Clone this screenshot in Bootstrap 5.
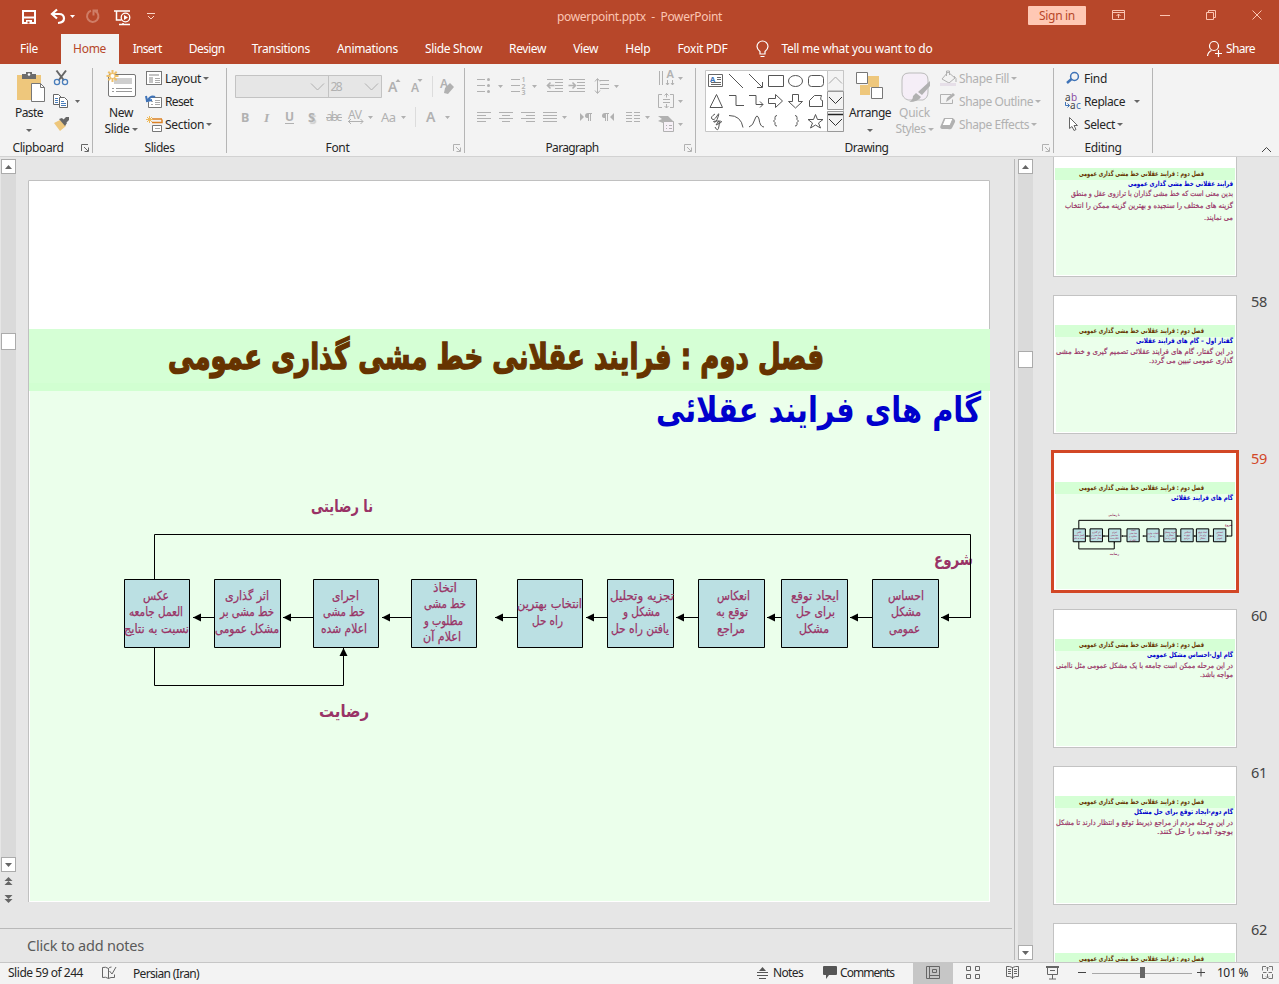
<!DOCTYPE html>
<html lang="en">
<head>
<meta charset="utf-8">
<title>powerpoint.pptx - PowerPoint</title>
<link href="https://cdn.jsdelivr.net/npm/bootstrap@5.3.0/dist/css/bootstrap.min.css" rel="stylesheet">
<style>
body{font-family:"Noto Sans","Open Sans",sans-serif;font-size:12px;line-height:16px;color:#262626;background:#e6e6e6;width:1279px;height:984px;overflow:hidden}
svg{display:block;flex:none;overflow:visible}
svg text{font-family:"Noto Sans","Open Sans",sans-serif}
[data-w]{white-space:nowrap;display:inline-block}
.titlebar{height:34px;background:#b7472a;color:#fbc5b2}
.titlebar .doc{width:868px;padding-left:397px}
.signin{width:58px;height:19px;background:#ffc8b4;color:#b7472a;border-radius:1px;line-height:19px;padding:0;font-size:12px;border:0;margin-bottom:3px}
.tabs{height:30px;background:#b7472a;padding-left:6.5px}
.tabs .nav-link{color:#fff;height:30px;padding:0 13.55px;line-height:29px}
.tabs .nav-link.active{background:#f3f3f3;color:#b7472a;border-radius:0;width:58px;padding:0 12px}
.tabs .file{margin-right:9.500px}
.ribbon{height:93px;background:#f3f3f3;border-bottom:1px solid #d2d2d2}
.ribbon .vr{width:1px;height:85px;margin-top:4px;background:#b5b5b5;opacity:1;align-self:flex-start}
.grp-body{height:76px}
.launch{width:16px}
.g1{width:92px}.g2{width:133px}.g3{width:237px}.g4{width:230px}.g5{width:357px}.g6{width:98px}
.big{display:flex;flex-direction:column;align-items:center;border:0;background:none;padding:0;color:inherit;line-height:15.5px}
.w-paste{width:48px;margin-left:5px}.w-new{width:50px;margin-left:3px}.w-arr{width:42px}.w-quick{width:47px}
.cmds{padding-top:3px}
.cmds>div{height:23px;line-height:22px;display:flex;align-items:center}
.caret{width:0;height:0;border:3px solid transparent;border-top:3px solid #666;border-bottom:0;display:inline-block;margin-left:2px;vertical-align:middle}
.caret.far{margin-left:9px}
.dim{color:#b1b1b1}.dim .caret{border-top-color:#b1b1b1}
.work{height:805px}
.left-pane{width:1012px}
.stage{height:771px}
.sbar{width:15px;background:#dadada}
.sbar .cap,.sbar .knob{width:15px;background:#fff;border:1px solid #ababab}
.sbar .cap{height:15px;display:flex;align-items:center;justify-content:center}
.sbar .knob{height:17px}
.sb-l{height:713px;margin:2px 0 0 1px}.sb-l .knob{margin-top:159px}
.sb-r{height:801px;margin:2px 0 0 3px}.sb-r .knob{margin-top:177px}
.slide-wrap{padding:23px 0 0 12px}
.notes{height:34px;border-top:1px solid #b9b9b9;font-size:14.5px;color:#5a5a5a;padding:0 0 0 27px;line-height:32px}
.split{width:1px;background:#b9b9b9;margin:2px 0 2px 2px}
.rail{overflow:hidden;height:805px;padding-left:20px}
.rail-list{margin-top:-19px;gap:18px}
.thumb{width:184px;height:139px;border:1px solid #c3c3c3;background:#fff}
.thumb.sel{outline:3px solid #d24726;outline-offset:-1px;border-color:#d24726}
.num{font-size:14.5px;color:#444;margin-left:14px;line-height:12px}
.sel+.num{color:#d24726}
.status{height:22px;background:#f3f3f3;border-top:1px solid #c6c6c6}
.lh-st{line-height:20px}
.fa{font-family:"DejaVu Sans",sans-serif;direction:rtl}
</style>
</head>
<body>
<header>
 <div class="titlebar d-flex align-items-center">
  <svg width="160" height="34" viewBox="0 0 160 34" fill="none" stroke="#fff">
   <path d="M23 11h12v12H23zM23 17.5h12" stroke-width="2"/><path d="M26 20h6v4h-6z" fill="#fff" stroke="none"/><path d="M27.500 21.500h2v2h-2z" fill="#b7472a" stroke="none"/>
   <path d="M53 14h6q5 0 5 4.500q0 4-6 4.500" stroke-width="2.200"/><path d="M57 9.500l-5 4.500 5 4.500" stroke-width="2.200"/>
   <path d="M70 15h5l-2.500 3z" fill="#fff" stroke="none"/>
   <g stroke="#cf7d66" stroke-width="2"><path d="M91 10.800a5.700 5.700 0 1 0 4 .2M98 10.500h-4.500v5"/></g>
   <path d="M114 11h16M116.500 11v9h5M119 24.500h11M123 23v1.500" stroke-width="1.500"/><circle cx="125.500" cy="17.500" r="4.300" stroke-width="1.300"/><path d="M124 15l4 2.500-4 2.500z" fill="#fff" stroke="none"/>
   <path d="M147 13.500h8M148 16l3 3 3-3" stroke="#fbd3c6"/>
  </svg>
  <div class="doc"><span data-w="165" style="white-space:pre">powerpoint.pptx  -  PowerPoint</span></div>
  <button class="btn signin"><span data-w="36">Sign in</span></button>
  <svg width="193" height="34" viewBox="1086 0 193 34" fill="none" stroke="#fbc5b2">
   <path d="M1112.500 10.500h12v9h-12zM1112.500 12.500h12M1118.500 18v-4M1116.500 16l2-2 2 2M1160 15.500h10M1206.500 12.500h7v7h-7zM1208.500 12v-1.500h7v7h-2M1252.500 10.500l9 9M1261.500 10.500l-9 9"/>
  </svg>
 </div>
 <nav class="tabs nav flex-nowrap">
  <a class="nav-link file"><span data-w="18">File</span></a>
  <a class="nav-link active"><span data-w="33">Home</span></a>
  <a class="nav-link"><span data-w="29">Insert</span></a>
  <a class="nav-link"><span data-w="36">Design</span></a>
  <a class="nav-link"><span data-w="58">Transitions</span></a>
  <a class="nav-link"><span data-w="61">Animations</span></a>
  <a class="nav-link"><span data-w="57">Slide Show</span></a>
  <a class="nav-link"><span data-w="37">Review</span></a>
  <a class="nav-link"><span data-w="25">View</span></a>
  <a class="nav-link"><span data-w="25">Help</span></a>
  <a class="nav-link"><span data-w="50">Foxit PDF</span></a>
  <svg width="27" height="30" viewBox="740 34 27 30" fill="none" stroke="#fff"><path d="M759 54v-2.500q-3-2.500-3-5a5.500 5.500 0 0 1 11 0q0 2.500-3 5v2.500zM759.500 56.500h4" stroke-width="1.200"/></svg>
  <a class="nav-link"><span data-w="151">Tell me what you want to do</span></a>
  <svg class="ms-auto" width="16" height="30" viewBox="1207 34 16 30" fill="none" stroke="#fff"><circle cx="1215" cy="46" r="4.500" stroke-width="1.200"/><path d="M1208.500 56q.5-4 4-5.500M1219.500 50v7M1216 53.500h7" stroke-width="1.200"/></svg>
  <a class="nav-link ps-1 pe-4"><span data-w="29">Share</span></a>
 </nav>
 <div class="ribbon d-flex">
  <section class="g1">
   <div class="grp-body d-flex">
    <button class="big w-paste">
     <svg width="48" height="41" viewBox="5 64 48 41"><path d="M17 75h24v25H17z" fill="#eec77c"/><path d="M22 74h4v-2h6v2h4v5H22z" fill="#6b6b6b"/><circle cx="29" cy="74.500" r="1.300" fill="#fff"/><path d="M31.500 83.500h9l4 4v14h-13z" fill="#fff" stroke="#777"/><path d="M40.500 83.500v4h4" fill="none" stroke="#777"/></svg>
     <span data-w="28">Paste</span><i class="caret ms-0 mt-2"></i></button>
    <svg width="39" height="76" viewBox="53 64 39 76" fill="none">
     <path d="M56.500 70.500l7.500 10M66 70.500l-7.500 10" stroke="#666" stroke-width="2"/><circle cx="57" cy="82" r="2.600" stroke="#4a7ebb" stroke-width="1.300"/><circle cx="65" cy="82" r="2.600" stroke="#4a7ebb" stroke-width="1.300"/>
     <path d="M53.500 94.500h5l3 3v7h-8z" fill="#fff" stroke="#666"/><path d="M59.500 97.500h5l3 3v7h-8z" fill="#fff" stroke="#666"/><path d="M55 98.500h3M55 100.500h3M55 102.500h3M61 101.500h3M61 103.500h5M61 105.500h5" stroke="#4a7ebb"/>
     <path d="M75 100h5l-2.500 3z" fill="#666"/>
     <path d="M54 123l6-3 6 6-6 5z" fill="#eec77c"/><path d="M59 119l3-1 5 5-2 3z M63 120l3-3h3v3l-3 3z" fill="#666"/>
    </svg>
   </div>
   <div class="d-flex"><div class="flex-grow-1 text-center"><span data-w="51">Clipboard</span></div>
    <svg class="launch" width="16" height="16" viewBox="0 0 16 16" fill="none" stroke="#666"><path d="M5.500 11V4.500H12M8 7l4 4M12.500 7.500v4h-4"/></svg></div>
  </section><div class="vr"></div>
  <section class="g2">
   <div class="grp-body d-flex">
    <button class="big w-new"><svg width="50" height="41" viewBox="96 64 50 41" fill="none"><rect x="108.500" y="74.500" width="27" height="22" rx="1.500" fill="#fff" stroke="#777"/><path d="M114 78h18v6h-18z" fill="#cfcfcf"/><path d="M112 88.500h2M116 88.500h16M112 91.500h2M116 91.500h16" stroke="#999"/><path d="M112.500 70v12M106.500 76h12M108.300 71.800l8.400 8.400M116.700 71.800l-8.400 8.400" stroke="#eec06a" stroke-width="2"/><circle cx="112.500" cy="76" r="2" fill="#fff"/></svg>
     <span data-w="24">New</span><span class="text-nowrap"><span data-w="25">Slide</span><i class="caret"></i></span></button>
    <svg width="19" height="76" viewBox="146 64 19 76" fill="none">
     <rect x="146.500" y="71.500" width="15" height="13" fill="#fff" stroke="#777"/><path d="M149 74h10v2h-10zM149 77h4v6h-4z" fill="#c4c4c4"/><path d="M155 78.500h5M155 80.500h5M155 82.500h5" stroke="#aaa"/>
     <path d="M151 97.500h10.500v10h-13v-6" fill="#fff" stroke="#777"/><path d="M155 100.500h5M155 102.500h5M155 104.500h5M151 101.500h2M151 104.500h2" stroke="#aaa"/><path d="M155 97q-4-2-7 3M146 96l1 5 5-1" stroke="#3f73b7" stroke-width="2"/>
     <path d="M152 119h10M152 122.500h10v-3" stroke="#dc8124" stroke-width="1.500"/><path d="M152.500 125.500h9v6h-9z" fill="#fff" stroke="#777"/><path d="M155 128.500h5" stroke="#aaa"/><path d="M149.500 116v7M146 119.500h7M147 117l5 5M152 117l-5 5" stroke="#eeb95a"/>
    </svg>
    <div class="cmds"><div><span data-w="36">Layout</span><i class="caret"></i></div><div><span data-w="28">Reset</span></div><div><span data-w="39">Section</span><i class="caret"></i></div></div>
   </div>
   <div class="text-center"><span data-w="30">Slides</span></div>
  </section><div class="vr"></div>
  <section class="g3">
   <svg width="237" height="76" viewBox="227 64 237 76" fill="none" stroke="#b1b1b1">
    <path d="M235.500 75.500h146v22h-146zM328.500 75v22" fill="#e6e6e6" stroke="#c3c3c3"/>
    <path d="M311 83.500l6.500 6.500 6.500-6.500M365 83.500l6.500 6.500 6.500-6.500"/>
    <g fill="#b1b1b1" stroke="none" font-size="12">
     <text x="330.500" y="91" textLength="12">28</text>
     <text x="388" y="92" font-size="14" font-weight="600">A</text><path d="M395.500 82l2.500-3 2.500 3z"/>
     <text x="411" y="92" font-size="12" font-weight="600">A</text><path d="M417.500 79h5l-2.500 3z"/>
     <text x="440" y="88" font-size="12" font-weight="600">A</text><path d="M445 88l5-5 4 4-6 7-4-1z"/>
     <text x="241" y="121.500" font-weight="700" font-size="12.500">B</text>
     <text x="264" y="121.500" font-style="italic" font-weight="700" font-size="13.500" style="font-family:'Liberation Serif',serif">I</text>
     <text x="285" y="121" font-weight="700" textLength="9">U</text><path d="M285 123h9v1h-9z"/>
     <text x="308" y="122" font-weight="700" font-size="13" style="text-shadow:1.500px 1.500px 1px #ccc">S</text>
     <text x="326" y="121" textLength="16">abc</text><path d="M326 117h16v1h-16z"/>
     <text x="348" y="119" textLength="14">AV</text><path d="M368 116h5l-2.500 3zM401 116h5l-2.500 3zM445 116h5l-2.500 3z"/>
     <text x="381" y="121.500" font-size="13" textLength="15">Aa</text>
     <text x="426" y="121.500" font-size="14" font-weight="600">A</text>
    </g>
    <path d="M348 121.500h15M351 119l-2.500 2.500 2.500 2.500M360.500 119l2.500 2.500-2.500 2.500"/><path d="M432.500 76v21M415.500 107v20" stroke="#dcdcdc"/>
   </svg>
   <div class="d-flex"><div class="flex-grow-1 text-center"><span data-w="24">Font</span></div>
    <svg class="launch" width="16" height="16" viewBox="0 0 16 16" fill="none" stroke="#b1b1b1"><path d="M5.500 11V4.500H12M8 7l4 4M12.500 7.500v4h-4"/></svg></div>
  </section><div class="vr"></div>
  <section class="g4">
   <svg width="230" height="76" viewBox="465 64 230 76" fill="none" stroke="#b1b1b1">
    <path d="M477 79.500h8M477 85.500h8M477 91.500h8M511 79.500h9M511 85.500h9M511 91.500h9"/>
    <g fill="#b1b1b1" stroke="none"><circle cx="488.500" cy="79.500" r="1.500"/><circle cx="488.500" cy="85.500" r="1.500"/><circle cx="488.500" cy="91.500" r="1.500"/>
     <g font-size="7" font-weight="600"><text x="521.500" y="82">1</text><text x="521.500" y="88.500">2</text><text x="521.500" y="95">3</text></g>
     <path d="M498 85h5l-2.500 3zM532 85h5l-2.500 3zM614 85h5l-2.500 3zM562 116h5l-2.500 3zM645 116h5l-2.500 3zM678 77h5l-2.500 3zM678 100h5l-2.500 3zM678 123h5l-2.500 3z"/>
     <path d="M580 113v8l4-4zM614 113v8l-4-4z"/><text x="666.500" y="78" font-size="11" font-weight="600">A</text>
     <path d="M585 116q0-3 3-3h4v1h-1v7h-1v-7h-1v7h-1v-3q-3 0-3-2zM602 116q0-3 3-3h4v1h-1v7h-1v-7h-1v7h-1v-3q-3 0-3-2z"/>
     <path d="M658 116h10l6 6h-5l-1 1h-5l-5-2 4-2z"/>
    </g>
    <path d="M547 79.500h16M555 82.500h8M555 85.500h8M555 88.500h8M547 91.500h16M569 79.500h16M577 82.500h8M577 85.500h8M577 88.500h8M569 91.500h16"/>
    <path d="M547.500 85.500h7M550.500 82.500l-3 3 3 3M568.500 85.500h7M572.500 82.500l3 3-3 3" stroke-width="1.600"/>
    <path d="M600 80.500h9M600 84.500h9M600 88.500h9M597.500 79v14M595 81.500l2.500-3 2.500 3M595 90.500l2.500 3 2.500-3"/>
    <path d="M477 112.500h14M477 115.500h9M477 118.500h14M477 121.500h9M499 112.500h14M502 115.500h8M499 118.500h14M502 121.500h8M521 112.500h14M526 115.500h9M521 118.500h14M526 121.500h9M543 112.500h14M543 115.500h14M543 118.500h14M543 121.500h14M626 112.500h6M626 115.500h6M626 118.500h6M626 121.500h6M634 112.500h6M634 115.500h6M634 118.500h6M634 121.500h6"/>
    <path d="M659.500 71v14M662.500 71v14M667.500 80v5M672.500 80v5M666 83l1.500 2 1.500-2M671 83l1.500 2 1.500-2"/>
    <path d="M662 94.500h-3.500v13h3.500M670 94.500h3.500v13H670M663 99.500h7M663 102.500h7M666.500 93.500v4M664.500 95.500l2-2 2 2M666.500 104v4M664.500 106l2 2 2-2"/><path d="M663.500 121.500h10v10h-10z" fill="#f6f0f7"/><path d="M666 125.500h1M669 125.500h3M666 128.500h1M669 128.500h3"/>
   </svg>
   <div class="d-flex"><div class="flex-grow-1 text-center"><span data-w="53">Paragraph</span></div>
    <svg class="launch" width="16" height="16" viewBox="0 0 16 16" fill="none" stroke="#b1b1b1"><path d="M5.500 11V4.500H12M8 7l4 4M12.500 7.500v4h-4"/></svg></div>
  </section><div class="vr"></div>
  <section class="g5">
   <div class="grp-body d-flex">
    <svg width="153" height="76" viewBox="696 64 153 76" fill="none" stroke="#555">
     <path d="M705.500 70.500h138v61h-138z" fill="#fff" stroke="#c6c6c6"/><path d="M827.500 70.500h16v20h-16z" fill="#f3f3f3" stroke="#c6c6c6"/><path d="M827.500 91.500h16v18h-16zM827.500 111.500h16v20h-16z" fill="#f3f3f3" stroke="#999"/>
     <path d="M829 83.500l6.500-6.500 6.500 6.500" stroke="#aaa"/><path d="M829 97l6.500 6.500 6.500-6.500M829 119l6.500 6.500 6.500-6.500" stroke="#333"/><path d="M828 114.500h15" stroke="#222" stroke-width="1.500"/>
     <path d="M708.500 74.500h14v12h-14zM717 77.500h4M717 79.500h4M711 82.500h10M711 84.500h10" stroke="#666"/><text x="710" y="81.500" font-size="7.500" font-weight="700" fill="#3f73b7" stroke="none">A</text>
     <path d="M729 74l14 14M749 74l13 13M762.500 82v5.500H757M768.500 75.500h15v11h-15z"/><ellipse cx="795.500" cy="81" rx="7" ry="5.500"/><rect x="808.500" y="75.500" width="15" height="11" rx="3"/>
     <path d="M716.500 94.500l6 13h-12.500zM729 95.500h7v10h8M749 95.500h7v9h7M760 101.500l3 3-3 3M768.500 98.500h7v-4l7 6.500-7 6.500v-4h-7zM792.500 94.500h6v7h4l-7 6.500-7-6.500h4zM809.500 106.500v-6l5-5h7q-2 5 1 5v6z"/>
     <path d="M715 114q-5 3-3 5t5-3 1 1-4 5 4-1 2 2-4 2 2-3 1 4-4 1M729 115.500q12 0 14 12M749 127q4-1 6-8 2-6 4 0 1 8 5 8M777 115.500q-2 0-2 2v2l-1.500 1.500 1.500 1.500v2q0 1.500 2 1.500M795 115.500q2 0 2 2v2l1.500 1.500-1.500 1.500v2q0 1.500-2 1.500M815.500 114.500l2 5h5.500l-4.500 3.500 2 5-5-3-5 3 2-5-4.500-3.500h5.500z"/>
    </svg>
    <button class="big w-arr"><svg width="42" height="41" viewBox="849 64 42 41"><path d="M868 76h11v11h-11zM860 85h10v10h-10z" fill="#eec77c"/><path d="M856.500 72.500h11v11h-11zM871.500 87.500h11v11h-11z" fill="#fff" stroke="#777"/></svg><span data-w="42">Arrange</span><i class="caret ms-0 mt-2"></i></button>
    <button class="big w-quick dim"><svg width="46" height="41" viewBox="892 64 46 41" fill="none"><path d="M908 100q-6-2-6-8V80q0-7 7-7h12q7 0 7 7v12q0 6-5 8z" fill="#f5eef7" stroke="#bbb"/><path d="M930 81v5l-8 9-4-3zM916 93l5 4q-3 5-12 5 4-2 4-6z" fill="#b1b1b1"/></svg><span data-w="31">Quick</span><span class="text-nowrap"><span data-w="30">Styles</span><i class="caret"></i></span></button>
    <svg width="17" height="76" viewBox="938 64 17 76" fill="none" stroke="#b1b1b1"><path d="M942 79l6-7 7 6-6 5zM946.500 76v-5h3v4M954 76q3 2 2 6"/><path d="M940 83h16v3h-16z" fill="#e6dfe8" stroke="none"/><path d="M951 94.500h-10.500v9h12v-4"/><path d="M946 102l1-4 6-5 2 2-6 5z" fill="#b1b1b1" stroke="none"/><path d="M944 118h7q5 1 4 4l-3 6q-1 2-4 1h-6q-3-1-1-4z" fill="#b1b1b1" stroke="none"/><path d="M945 118.500h8l-3 7h-8z" fill="#fff"/></svg>
    <div class="cmds dim ps-1"><div><span data-w="50">Shape Fill</span><i class="caret"></i></div><div><span data-w="74">Shape Outline</span><i class="caret"></i></div><div><span data-w="70">Shape Effects</span><i class="caret"></i></div></div>
   </div>
   <div class="d-flex"><div class="flex-grow-1 text-center"><span data-w="44">Drawing</span></div>
    <svg class="launch" width="16" height="16" viewBox="0 0 16 16" fill="none" stroke="#b1b1b1"><path d="M5.500 11V4.500H12M8 7l4 4M12.500 7.500v4h-4"/></svg></div>
  </section><div class="vr"></div>
  <section class="g6">
   <div class="grp-body d-flex">
    <svg width="30" height="76" viewBox="1054 64 30 76" fill="none"><circle cx="1074.500" cy="76.500" r="3.900" stroke="#3f73b7" stroke-width="1.500"/><path d="M1071.500 79l-4.500 4" stroke="#3f73b7" stroke-width="2.500"/>
     <g font-size="10"><text x="1065" y="101" fill="#444">a</text><text x="1071" y="101" fill="#8a4fa3">b</text><text x="1070" y="108.500" fill="#444">a</text><text x="1076" y="108.500" fill="#3f73b7">c</text></g><path d="M1065.500 102v3.500h4M1067.500 103.500l2 2-2 2" stroke="#3f73b7"/>
     <path d="M1069.500 117.500v11l2.500-2 2 4 2-1-2-4h3.500z" fill="#fff" stroke="#666"/></svg>
    <div class="cmds"><div><span data-w="23">Find</span></div><div><span data-w="41">Replace</span><i class="caret far"></i></div><div><span data-w="31">Select</span><i class="caret"></i></div></div>
   </div>
   <div class="text-center"><span data-w="37">Editing</span></div>
  </section><div class="vr"></div>
  <svg class="ms-auto" width="22" height="92" viewBox="1257 64 22 92" fill="none" stroke="#444"><path d="M1262 152l4.500-4.500 4.500 4.500"/></svg>
 </div>
</header>

<main class="work d-flex">
 <div class="left-pane">
  <div class="stage d-flex">
   <div>
    <div class="sbar sb-l d-flex flex-column"><div class="cap"><svg width="7" height="4"><path d="M0 4l3.500-4L7 4z" fill="#666"/></svg></div><div class="knob"></div><div class="cap mt-auto"><svg width="7" height="4"><path d="M0 0h7L3.500 4z" fill="#666"/></svg></div></div>
    <svg width="16" height="40" viewBox="0 872 16 40" fill="#666"><path d="M4.500 881l4-4 4 4zM4.500 885l4-4 4 4zM4.500 895h8l-4 4zM4.500 899h8l-4 4z"/></svg>
   </div>
   <div class="slide-wrap">
    <svg width="963" height="723" viewBox="28 180 963 723">
     <path d="M28 180h962v722H28z" fill="#fff"/><path d="M28.500 902V180.500h961V329" fill="none" stroke="#c0c0c0"/>
     <path d="M29 329h961v62H29z" fill="#d5ffd5"/><path d="M29 383h961v8H29z" fill="#d1ffd1"/><path d="M30 391h959v510H30z" fill="#ebffeb"/>
     <g id="heads"></g>
     <g id="diagram"></g>
    </svg>
   </div>
  </div>
  <div class="notes"><span data-w="117">Click to add notes</span></div>
 </div>
 <div class="split"></div>
 <div class="sbar sb-r d-flex flex-column"><div class="cap"><svg width="7" height="4"><path d="M0 4l3.500-4L7 4z" fill="#666"/></svg></div><div class="knob"></div><div class="cap mt-auto"><svg width="7" height="4"><path d="M0 0h7L3.500 4z" fill="#666"/></svg></div></div>
 <div class="rail"><div class="rail-list d-flex flex-column" id="rail"></div></div>
</main>

<footer class="status d-flex">
 <div class="ps-2"><span data-w="75" style="line-height:19px">Slide 59 of 244</span></div>
 <svg width="50" height="21" viewBox="83 963 50 21" fill="none" stroke="#666"><path d="M108.500 968.500q-3-2-6-1v10q3-1 6 1v-10q1-1.500 3-1.500M108.500 978.500q2-1.500 6-1v-3M109.500 971l2.500 3 4-7"/></svg>
 <div><span data-w="66" style="line-height:21px">Persian (Iran)</span></div>
 <svg class="ms-auto" width="20" height="21" viewBox="753 963 20 21" stroke="#555"><path d="M757 972.500h11M757 975.500h11M759 978.500h7"/><path d="M759 971l3.500-4 3.500 4z" fill="#555" stroke="none"/></svg>
 <span data-w="30" class="lh-st">Notes</span>
 <svg width="37" height="21" viewBox="803 963 37 21"><path d="M824 966h12q1 0 1 1v7q0 1-1 1h-7l-3 4v-4h-2q-1 0-1-1v-7q0-1 1-1z" fill="#555"/></svg>
 <span data-w="54" class="lh-st">Comments</span>
 <svg width="323" height="21" viewBox="894 963 323 21" fill="none" stroke="#666">
  <path d="M913 963h40v21H913z" fill="#c6c6c6" stroke="none"/>
  <path d="M926.500 966.500h13v12h-13zM929.500 966.500v12M932.500 969.500h4v3h-4zM930 975.500h9"/>
  <path d="M966.500 966.500h4v4h-4zM975.500 966.500h4v4h-4zM966.500 974.500h4v4h-4zM975.500 974.500h4v4h-4z"/>
  <path d="M1012.500 967.500q-3-1.500-6-1v10q3-.5 6 1 3-1.500 6-1v-10q-3-.5-6 1zM1012.500 967v12M1008 969.500h3M1008 971.500h3M1008 973.500h3M1014 969.500h3M1014 971.500h3M1014 973.500h3"/>
  <path d="M1046 967h13" stroke-width="2"/><path d="M1047.500 968v6.500h10V968M1052.500 975v4M1049 979h7M1050 970.500h5"/>
  <path d="M1078 972.500h8M1197 972.500h8M1201 968.500v8" stroke="#444"/><path d="M1092 973.500h100" stroke="#a8a8a8"/><path d="M1140 967h5v11h-5z" fill="#666" stroke="none"/>
 </svg>
 <span data-w="31" class="lh-st">101 %</span>
 <svg width="31" height="21" viewBox="1248 963 31 21" fill="none" stroke="#777"><path d="M1266 966.500h-3.500v4M1269 966.500h3.500v4M1262.500 974v4.500h4M1272.500 974v4.500h-4M1267.500 967v4M1266 968.500l1.500-1.500 1.500 1.500M1267.500 978v-4M1266 976.500l1.500 1.500 1.500-1.500M1263 972.500h3.500M1272 972.500h-3.500"/></svg>
</footer>
<script src="https://cdn.jsdelivr.net/npm/bootstrap@5.3.0/dist/js/bootstrap.bundle.min.js"></script>
<script>
// Text spanning x1..x2 on the given baseline.
const line = (t, x1, x2, y, size, fill, extra = '') =>
  `<text x="${(x1 + x2) / 2}" y="${y}" font-size="${size}" fill="${fill}" text-anchor="middle" textLength="${x2 - x1}" lengthAdjust="spacingAndGlyphs" ${extra} class="fa" style="font-family:'DejaVu Sans',sans-serif">${t}</text>`;
const B = 'font-weight="700"', PLUM = '#993366', CHAPTER = 'فصل دوم : فرایند عقلانی خط مشی گذاری عمومی';

document.getElementById('heads').innerHTML =
  line(CHAPTER, 168, 824, 369, 36, '#663300', B + ' stroke="#663300" stroke-width="1.4"') +
  line('گام های فرایند عقلائی', 656, 981, 422, 35, '#0000cc', B);

const boxes = [
  [124, 66, [['عکس',143,169,600],['العمل جامعه',129,183,616],['نسبت به نتایج',124,189,633]]],
  [214, 67, [['اثر گذاری',225,269,600],['خط مشی بر',220,274,616],['مشکل عمومی',215,279,633]]],
  [313, 66, [['اجرای',332,359,600],['خط مشی',323,365,616],['اعلام شده',321,367,633]]],
  [411, 66, [['اتخاذ',433,457,592],['خط مشی',424,466,608],['مطلوب و',424,463,625],['اعلام آن',423,461,641]]],
  [517, 66, [['انتخاب بهترین',517,582,608],['راه حل',532,563,625]]],
  [607, 67, [['تجزیه وتحلیل',610,674,600],['مشکل و',623,660,616],['یافتن راه حل',611,669,633]]],
  [698, 67, [['انعکاس',717,750,600],['توقع به',716,748,616],['مراجع',717,745,633]]],
  [781, 67, [['ایجاد توقع',791,839,600],['برای حل',796,835,616],['مشکل',799,829,633]]],
  [872, 67, [['احساس',888,924,600],['مشکل',891,921,616],['عمومی',889,920,633]]]
];
const arrows = [[193,214],[283,313],[382,411],[495,517],[586,607],[676,698],[767,781],[850,872],[941,970.5]];
let d = '';
for (const [x, w, rows] of boxes) {
  d += `<rect x="${x + .5}" y="579.5" width="${w - 1}" height="68" fill="#bbe0e3" stroke="#000" vector-effect="non-scaling-stroke"/>`;
  for (const [t, a, b, y] of rows) d += line(t, a, b, y, 12.5, PLUM, `stroke="${PLUM}" stroke-width=".25"`);
}
for (const [tip, from] of arrows)
  d += `<path d="M${tip} 617.5h${from - tip}" stroke="#000" vector-effect="non-scaling-stroke"/><path d="M${tip} 617.5l8-4v8z"/>`;
d += line('نا رضایتی', 311, 373, 512, 17, PLUM, B) + line('رضایت', 319, 369, 717, 17, PLUM, B) + line('شروع', 934, 973, 565, 17, PLUM, B);
d += '<path d="M154.5 579V534.5H970.5V618M154.5 648V685.5H343.5V648" fill="none" stroke="#000" vector-effect="non-scaling-stroke"/><path d="M343.5 648l4 8h-8z"/>';
document.getElementById('diagram').innerHTML = d;

const slides = [
  ['57', [['فرایند عقلانی خط مشی گذاری عمومی',75,180]], [['بدین معنی است که خط مشی گذاران با ترازوی عقل و منطق',18,180,58],['گزینه های مختلف را سنجیده و بهترین گزینه ممکن را انتخاب',12,180,70],['می نمایند.',151,180,82]]],
  ['58', [['گفتار اول – گام های فرایند عقلانی',83,180]], [['در این گفتار، گام های فرایند عقلائی تصمیم گیری و خط مشی',3,180,59],['گذاری عمومی تبیین می گردد.',96,180,68]]],
  ['59', [['گام های فرایند عقلائی',118,180]], []],
  ['60', [['گام اول-احساس مشکل عمومی',94,180]], [['در این مرحله ممکن است جامعه با یک مشکل عمومی مثل ناامنی',3,180,59],['مواجه باشد.',147,180,68]]],
  ['61', [['گام دوم-ایجاد توقع برای حل مشکل',81,180]], [['در این مرحله مردم از مراجع ذیربط توقع و انتظار دارند تا مشکل',3,180,59],['بوجود آمده را حل کنند.',104,180,68]]],
  ['62', [], []]
];
document.getElementById('rail').innerHTML = slides.map(([n, sub, body]) => `
 <div class="d-flex align-items-start"><div class="thumb ${n === '59' ? 'sel' : ''}">
 <svg width="182" height="137" viewBox="1 1 182 137"><path d="M2 30h180v12H2z" fill="#d5ffd5"/><path d="M3 42h179v95H3z" fill="#ebffeb"/>
 ${line(CHAPTER, 26, 151, 37.5, 7, '#663300', B)}
 ${sub.map(s => line(s[0], s[1], s[2], 48, 7, '#0000cc', B)).join('')}
 ${body.map(s => line(s[0], s[1], s[2], s[3], 7.3, PLUM, `stroke="${PLUM}" stroke-width=".2"`)).join('')}
 ${n === '59' ? '<g transform="translate(-3.15 -32.9) scale(.1875 .1894)"><use href="#diagram"/></g>' : ''}
 </svg></div><div class="num"><span data-w="16">${n}</span></div></div>`).join('');

// Even out label widths to their declared measure.
document.querySelectorAll('[data-w]').forEach(e => {
  const w = +e.dataset.w, n = e.textContent.length;
  e.style.letterSpacing = ((w - e.getBoundingClientRect().width) / n).toFixed(3) + 'px';
});
</script>
</body>
</html>
